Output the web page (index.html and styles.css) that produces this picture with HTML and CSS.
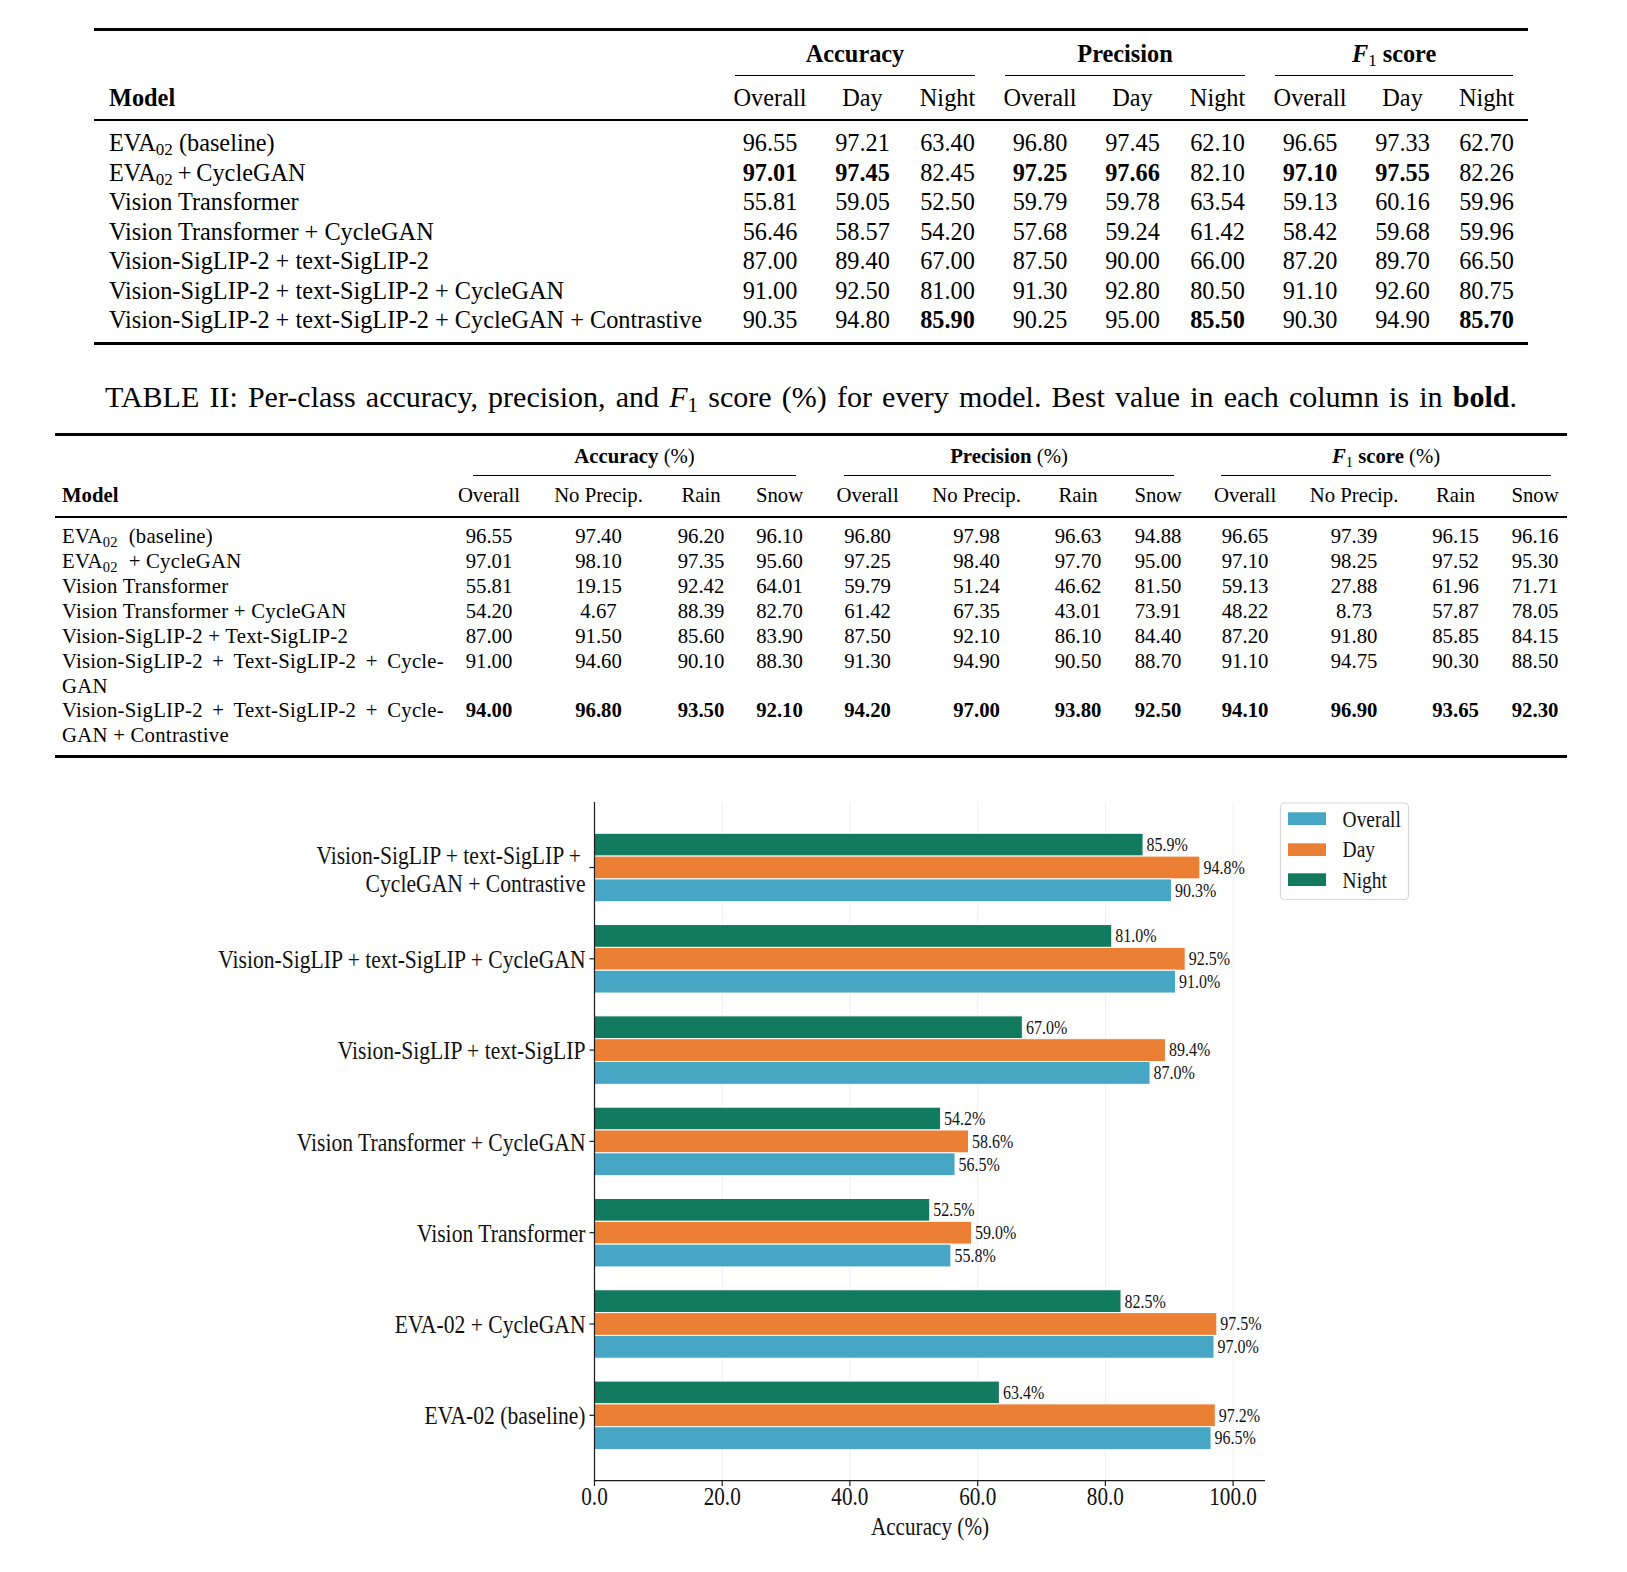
FILE: index.html
```html
<!DOCTYPE html>
<html>
<head>
<meta charset="utf-8">
<link rel="stylesheet" href="styles.css">
</head>
<body>
<table class="t1">
  <colgroup>
    <col class="m"><col class="ov"><col class="dy"><col class="dy"><col class="ov"><col class="dy"><col class="dy"><col class="ov"><col class="dy"><col class="nl">
  </colgroup>
  <thead>
    <tr class="grp">
      <th></th>
      <th colspan="3"><div class="cmid">Accuracy</div></th>
      <th colspan="3"><div class="cmid">Precision</div></th>
      <th colspan="3"><div class="cmid"><i>F</i><sub class="nb">1</sub>&nbsp;score</div></th>
    </tr>
    <tr class="colh">
      <th class="model">Model</th>
      <th>Overall</th><th>Day</th><th>Night</th>
      <th>Overall</th><th>Day</th><th>Night</th>
      <th>Overall</th><th>Day</th><th>Night</th>
    </tr>
  </thead>
  <tbody>
    <tr><td class="model">EVA<sub>02</sub> (baseline)</td><td>96.55</td><td>97.21</td><td>63.40</td><td>96.80</td><td>97.45</td><td>62.10</td><td>96.65</td><td>97.33</td><td>62.70</td></tr>
    <tr><td class="model">EVA<sub>02</sub>&#8201;+&#8201;CycleGAN</td><td><b>97.01</b></td><td><b>97.45</b></td><td>82.45</td><td><b>97.25</b></td><td><b>97.66</b></td><td>82.10</td><td><b>97.10</b></td><td><b>97.55</b></td><td>82.26</td></tr>
    <tr><td class="model">Vision Transformer</td><td>55.81</td><td>59.05</td><td>52.50</td><td>59.79</td><td>59.78</td><td>63.54</td><td>59.13</td><td>60.16</td><td>59.96</td></tr>
    <tr><td class="model">Vision Transformer + CycleGAN</td><td>56.46</td><td>58.57</td><td>54.20</td><td>57.68</td><td>59.24</td><td>61.42</td><td>58.42</td><td>59.68</td><td>59.96</td></tr>
    <tr><td class="model">Vision-SigLIP-2 + text-SigLIP-2</td><td>87.00</td><td>89.40</td><td>67.00</td><td>87.50</td><td>90.00</td><td>66.00</td><td>87.20</td><td>89.70</td><td>66.50</td></tr>
    <tr><td class="model">Vision-SigLIP-2 + text-SigLIP-2 + CycleGAN</td><td>91.00</td><td>92.50</td><td>81.00</td><td>91.30</td><td>92.80</td><td>80.50</td><td>91.10</td><td>92.60</td><td>80.75</td></tr>
    <tr><td class="model">Vision-SigLIP-2 + text-SigLIP-2 + CycleGAN + Contrastive</td><td>90.35</td><td>94.80</td><td><b>85.90</b></td><td>90.25</td><td>95.00</td><td><b>85.50</b></td><td>90.30</td><td>94.90</td><td><b>85.70</b></td></tr>
  </tbody>
</table>

<p class="caption">TABLE II: Per-class accuracy, precision, and <i>F</i><sub>1</sub> score (%) for every model. Best value in each column is in <b>bold</b>.</p>

<table class="t2">
  <colgroup>
    <col class="m"><col class="k1"><col class="k2"><col class="k3"><col class="k4"><col class="k5"><col class="k6"><col class="k7"><col class="k8"><col class="k9"><col class="k10"><col class="k11"><col class="k12">
  </colgroup>
  <thead>
    <tr class="grp">
      <th></th>
      <th colspan="4"><div class="cmid g1">Accuracy <span class="rg">(%)</span></div></th>
      <th colspan="4"><div class="cmid g2">Precision <span class="rg">(%)</span></div></th>
      <th colspan="4"><div class="cmid g3"><i>F</i><sub class="nb">1</sub>&nbsp;score <span class="rg">(%)</span></div></th>
    </tr>
    <tr class="colh">
      <th class="model">Model</th>
      <th>Overall</th><th>No Precip.</th><th>Rain</th><th>Snow</th>
      <th>Overall</th><th>No Precip.</th><th>Rain</th><th>Snow</th>
      <th>Overall</th><th>No Precip.</th><th>Rain</th><th class="last">Snow</th>
    </tr>
  </thead>
  <tbody>
    <tr><td class="model">EVA<sub>02</sub>&nbsp; (baseline)</td><td>96.55</td><td>97.40</td><td>96.20</td><td>96.10</td><td>96.80</td><td>97.98</td><td>96.63</td><td>94.88</td><td>96.65</td><td>97.39</td><td>96.15</td><td class="last">96.16</td></tr>
    <tr><td class="model">EVA<sub>02</sub>&nbsp; + CycleGAN</td><td>97.01</td><td>98.10</td><td>97.35</td><td>95.60</td><td>97.25</td><td>98.40</td><td>97.70</td><td>95.00</td><td>97.10</td><td>98.25</td><td>97.52</td><td class="last">95.30</td></tr>
    <tr><td class="model">Vision Transformer</td><td>55.81</td><td>19.15</td><td>92.42</td><td>64.01</td><td>59.79</td><td>51.24</td><td>46.62</td><td>81.50</td><td>59.13</td><td>27.88</td><td>61.96</td><td class="last">71.71</td></tr>
    <tr><td class="model">Vision Transformer + CycleGAN</td><td>54.20</td><td>4.67</td><td>88.39</td><td>82.70</td><td>61.42</td><td>67.35</td><td>43.01</td><td>73.91</td><td>48.22</td><td>8.73</td><td>57.87</td><td class="last">78.05</td></tr>
    <tr><td class="model">Vision-SigLIP-2 + Text-SigLIP-2</td><td>87.00</td><td>91.50</td><td>85.60</td><td>83.90</td><td>87.50</td><td>92.10</td><td>86.10</td><td>84.40</td><td>87.20</td><td>91.80</td><td>85.85</td><td class="last">84.15</td></tr>
    <tr><td class="model"><span class="jl">Vision-SigLIP-2 + Text-SigLIP-2 + Cycle-</span>GAN</td><td>91.00</td><td>94.60</td><td>90.10</td><td>88.30</td><td>91.30</td><td>94.90</td><td>90.50</td><td>88.70</td><td>91.10</td><td>94.75</td><td>90.30</td><td class="last">88.50</td></tr>
    <tr class="best"><td class="model"><span class="jl">Vision-SigLIP-2 + Text-SigLIP-2 + Cycle-</span>GAN + Contrastive</td><td>94.00</td><td>96.80</td><td>93.50</td><td>92.10</td><td>94.20</td><td>97.00</td><td>93.80</td><td>92.50</td><td>94.10</td><td>96.90</td><td>93.65</td><td class="last">92.30</td></tr>
  </tbody>
</table>

<svg class="chart" width="1627" height="800" viewBox="0 758 1627 800" xmlns="http://www.w3.org/2000/svg">
  <g class="grid">
    <line x1="722.2" y1="802" x2="722.2" y2="1480.6"/>
    <line x1="849.9" y1="802" x2="849.9" y2="1480.6"/>
    <line x1="977.7" y1="802" x2="977.7" y2="1480.6"/>
    <line x1="1105.4" y1="802" x2="1105.4" y2="1480.6"/>
    <line x1="1233.1" y1="802" x2="1233.1" y2="1480.6"/>
  </g>

  <g class="bars">
    <rect class="night" x="594.5" y="833.26" width="548.56" height="22.83"/>
    <rect class="day" x="594.5" y="856.09" width="605.39" height="22.83"/>
    <rect class="overall" x="594.5" y="878.92" width="576.98" height="22.83"/>
    <rect class="night" x="594.5" y="924.56" width="517.27" height="22.83"/>
    <rect class="day" x="594.5" y="947.39" width="590.71" height="22.83"/>
    <rect class="overall" x="594.5" y="970.22" width="581.13" height="22.83"/>
    <rect class="night" x="594.5" y="1015.86" width="427.86" height="22.83"/>
    <rect class="day" x="594.5" y="1038.69" width="570.91" height="22.83"/>
    <rect class="overall" x="594.5" y="1061.52" width="555.58" height="22.83"/>
    <rect class="night" x="594.5" y="1107.16" width="346.12" height="22.83"/>
    <rect class="day" x="594.5" y="1129.99" width="374.03" height="22.83"/>
    <rect class="overall" x="594.5" y="1152.82" width="360.55" height="22.83"/>
    <rect class="night" x="594.5" y="1198.46" width="335.27" height="22.83"/>
    <rect class="day" x="594.5" y="1221.29" width="377.09" height="22.83"/>
    <rect class="overall" x="594.5" y="1244.12" width="356.40" height="22.83"/>
    <rect class="night" x="594.5" y="1289.76" width="526.53" height="22.83"/>
    <rect class="day" x="594.5" y="1312.59" width="622.32" height="22.83"/>
    <rect class="overall" x="594.5" y="1335.42" width="619.51" height="22.83"/>
    <rect class="night" x="594.5" y="1381.06" width="404.87" height="22.83"/>
    <rect class="day" x="594.5" y="1403.89" width="620.78" height="22.83"/>
    <rect class="overall" x="594.5" y="1426.72" width="616.57" height="22.83"/>
  </g>

  <g class="vl">
    <text transform="translate(1146.6 851) scale(.865 1)">85.9%</text>
    <text transform="translate(1203.4 873.8) scale(.865 1)">94.8%</text>
    <text transform="translate(1175 896.6) scale(.865 1)">90.3%</text>
    <text transform="translate(1115.3 942.3) scale(.865 1)">81.0%</text>
    <text transform="translate(1188.7 965.1) scale(.865 1)">92.5%</text>
    <text transform="translate(1179.1 987.9) scale(.865 1)">91.0%</text>
    <text transform="translate(1025.9 1033.6) scale(.865 1)">67.0%</text>
    <text transform="translate(1168.9 1056.4) scale(.865 1)">89.4%</text>
    <text transform="translate(1153.6 1079.2) scale(.865 1)">87.0%</text>
    <text transform="translate(944.1 1124.9) scale(.865 1)">54.2%</text>
    <text transform="translate(972 1147.7) scale(.865 1)">58.6%</text>
    <text transform="translate(958.6 1170.5) scale(.865 1)">56.5%</text>
    <text transform="translate(933.3 1216.2) scale(.865 1)">52.5%</text>
    <text transform="translate(975.1 1239) scale(.865 1)">59.0%</text>
    <text transform="translate(954.4 1261.8) scale(.865 1)">55.8%</text>
    <text transform="translate(1124.5 1307.5) scale(.865 1)">82.5%</text>
    <text transform="translate(1220.3 1330.3) scale(.865 1)">97.5%</text>
    <text transform="translate(1217.5 1353.1) scale(.865 1)">97.0%</text>
    <text transform="translate(1002.9 1398.8) scale(.865 1)">63.4%</text>
    <text transform="translate(1218.8 1421.6) scale(.865 1)">97.2%</text>
    <text transform="translate(1214.6 1444.4) scale(.865 1)">96.5%</text>
  </g>

  <g class="axis">
    <line x1="594.5" y1="802" x2="594.5" y2="1481.2"/>
    <line x1="593.9" y1="1480.6" x2="1265" y2="1480.6"/>
    <line x1="589.5" y1="867.5" x2="594.5" y2="867.5"/>
    <line x1="589.5" y1="958.8" x2="594.5" y2="958.8"/>
    <line x1="589.5" y1="1050.1" x2="594.5" y2="1050.1"/>
    <line x1="589.5" y1="1141.4" x2="594.5" y2="1141.4"/>
    <line x1="589.5" y1="1232.7" x2="594.5" y2="1232.7"/>
    <line x1="589.5" y1="1324" x2="594.5" y2="1324"/>
    <line x1="589.5" y1="1415.3" x2="594.5" y2="1415.3"/>
    <line x1="594.5" y1="1480.6" x2="594.5" y2="1486"/>
    <line x1="722.2" y1="1480.6" x2="722.2" y2="1486"/>
    <line x1="849.9" y1="1480.6" x2="849.9" y2="1486"/>
    <line x1="977.7" y1="1480.6" x2="977.7" y2="1486"/>
    <line x1="1105.4" y1="1480.6" x2="1105.4" y2="1486"/>
    <line x1="1233.1" y1="1480.6" x2="1233.1" y2="1486"/>
  </g>

  <g class="yl">
    <text transform="translate(581 864) scale(.865 1)">Vision-SigLIP + text-SigLIP +</text>
    <text transform="translate(585.5 892) scale(.865 1)">CycleGAN + Contrastive</text>
    <text transform="translate(585.5 968) scale(.865 1)">Vision-SigLIP + text-SigLIP + CycleGAN</text>
    <text transform="translate(585.5 1059.2) scale(.865 1)">Vision-SigLIP + text-SigLIP</text>
    <text transform="translate(585.5 1150.5) scale(.865 1)">Vision Transformer + CycleGAN</text>
    <text transform="translate(585.5 1241.8) scale(.865 1)">Vision Transformer</text>
    <text transform="translate(585.5 1333.1) scale(.865 1)">EVA-02 + CycleGAN</text>
    <text transform="translate(585.5 1424.4) scale(.865 1)">EVA-02 (baseline)</text>
  </g>

  <g class="xt">
    <text transform="translate(594.5 1505.3) scale(.865 1)">0.0</text>
    <text transform="translate(722.2 1505.3) scale(.865 1)">20.0</text>
    <text transform="translate(849.9 1505.3) scale(.865 1)">40.0</text>
    <text transform="translate(977.7 1505.3) scale(.865 1)">60.0</text>
    <text transform="translate(1105.4 1505.3) scale(.865 1)">80.0</text>
    <text transform="translate(1233.1 1505.3) scale(.865 1)">100.0</text>
    <text transform="translate(930 1535) scale(.865 1)">Accuracy (%)</text>
  </g>

  <g class="legend">
    <rect class="lbox" x="1280.5" y="803" width="128" height="96.5" rx="4"/>
    <rect class="overall" x="1288" y="812.3" width="38" height="12.7"/>
    <rect class="day" x="1288" y="843.3" width="38" height="12.7"/>
    <rect class="night" x="1288" y="873.3" width="38" height="12.7"/>
    <text class="lg" transform="translate(1342.6 826.7) scale(.865 1)">Overall</text>
    <text class="lg" transform="translate(1342.6 857.3) scale(.865 1)">Day</text>
    <text class="lg" transform="translate(1342.6 887.7) scale(.865 1)">Night</text>
  </g>
</svg>
</body>
</html>
```

FILE: styles.css
```css
html { overflow: hidden; background: #fff; }
body {
  margin: 0;
  width: 1627px;
  background: #fff;
  color: #000;
  font-family: "Liberation Serif", "Times New Roman", serif;
}

sub {
  font-size: 70%;
  line-height: 0;
  vertical-align: -0.25em;
}
sub.nb { font-weight: normal; }

/* ---------- Table I ---------- */
.t1 {
  width: 1434px;
  margin: 28px 0 0 94px;
  table-layout: fixed;
  border-collapse: separate;
  border-spacing: 0;
  font-size: 24.3px;
  line-height: 29.45px;
}
.t1 col.m { width: 626px; }
.t1 col.ov { width: 100px; }
.t1 col.dy { width: 85px; }
.t1 col.nl { width: 83px; }

.t1 th, .t1 td { padding: 0; text-align: center; white-space: nowrap; }
.t1 .grp th {
  border-top: 3px solid #000;
  padding-top: 8px;
  font-weight: bold;
}
.t1 .grp .cmid {
  margin: 0 15px;
  padding-bottom: 6.5px;
  border-bottom: 1px solid #000;
}
.t1 .colh th {
  padding-top: 7.25px;
  padding-bottom: 6.25px;
  border-bottom: 2px solid #000;
  font-weight: normal;
}
.t1 .colh th.model { font-weight: bold; text-align: left; padding-left: 15px; }
.t1 td.model { text-align: left; padding-left: 15px; }
.t1 tbody tr:first-child td { padding-top: 7.5px; }
.t1 tbody tr:last-child td { padding-bottom: 7px; border-bottom: 3px solid #000; }

/* ---------- Caption ---------- */
.caption {
  margin: 34px 0 0 105px;
  width: 1412px;
  font-size: 30px;
  line-height: 36px;
  text-align: justify;
  text-align-last: justify;
}

/* ---------- Table II ---------- */
.t2 {
  width: 1512px;
  margin: 18.7px 0 0 55px;
  table-layout: fixed;
  border-collapse: separate;
  border-spacing: 0;
  font-size: 20.75px;
  line-height: 24.9px;
}
.t2 col.m { width: 392px; }
.t2 col.k1 { width: 84px; }
.t2 col.k2 { width: 135px; }
.t2 col.k3 { width: 70px; }
.t2 col.k4 { width: 87px; }
.t2 col.k5 { width: 89px; }
.t2 col.k6 { width: 129px; }
.t2 col.k7 { width: 74px; }
.t2 col.k8 { width: 86px; }
.t2 col.k9 { width: 88px; }
.t2 col.k10 { width: 130px; }
.t2 col.k11 { width: 73px; }
.t2 col.k12 { width: 75px; }

.t2 th, .t2 td { padding: 0; text-align: center; vertical-align: top; white-space: nowrap; }
.t2 .grp th {
  border-top: 3px solid #000;
  padding-top: 7.5px;
  font-weight: bold;
}
.t2 .grp .cmid {
  padding-bottom: 6.5px;
  border-bottom: 1px solid #000;
}
.t2 .grp .g1 { margin: 0 27px 0 26px; }
.t2 .grp .g2 { margin: 0 27px 0 21px; }
.t2 .grp .g3 { margin: 0 16px 0 20px; }
.t2 .rg { font-weight: normal; }
.t2 .colh th {
  padding-top: 7px;
  padding-bottom: 8px;
  border-bottom: 2px solid #000;
  font-weight: normal;
  vertical-align: middle;
}
.t2 .colh th.model { font-weight: bold; text-align: left; padding-left: 7px; }
.t2 td.model {
  text-align: left;
  padding: 0 3px 0 7px;
  white-space: normal;
  letter-spacing: 0.25px;
}
.t2 .jl {
  display: block;
  text-align: justify;
  text-align-last: justify;
}
.t2 .last { padding-left: 11px; }
.t2 tbody tr:first-child td { padding-top: 6px; }
.t2 tbody tr:last-child td { padding-bottom: 6.9px; border-bottom: 3px solid #000; }
.t2 .best td { font-weight: bold; }
.t2 .best td.model { font-weight: normal; }

/* ---------- Chart ---------- */
.chart { display: block; }
.chart text {
  font-family: "Liberation Serif", "Times New Roman", serif;
  fill: #111;
}
.chart .grid line { stroke: #efefef; stroke-width: 1; }
.chart .bars rect { stroke: #fff; stroke-width: 1; }
.chart .night { fill: #127a5f; }
.chart .day { fill: #eb7f33; }
.chart .overall { fill: #47a6c4; }
.chart .axis line { stroke: #1a1a1a; stroke-width: 1.2; }
.chart .vl text { font-size: 18.5px; }
.chart .yl text { font-size: 25px; text-anchor: end; }
.chart .xt text { font-size: 24.5px; text-anchor: middle; }
.chart .lbox { fill: #fff; stroke: #d8d8d8; stroke-width: 1.2; }
.chart .lg { font-size: 22.5px; }
```
